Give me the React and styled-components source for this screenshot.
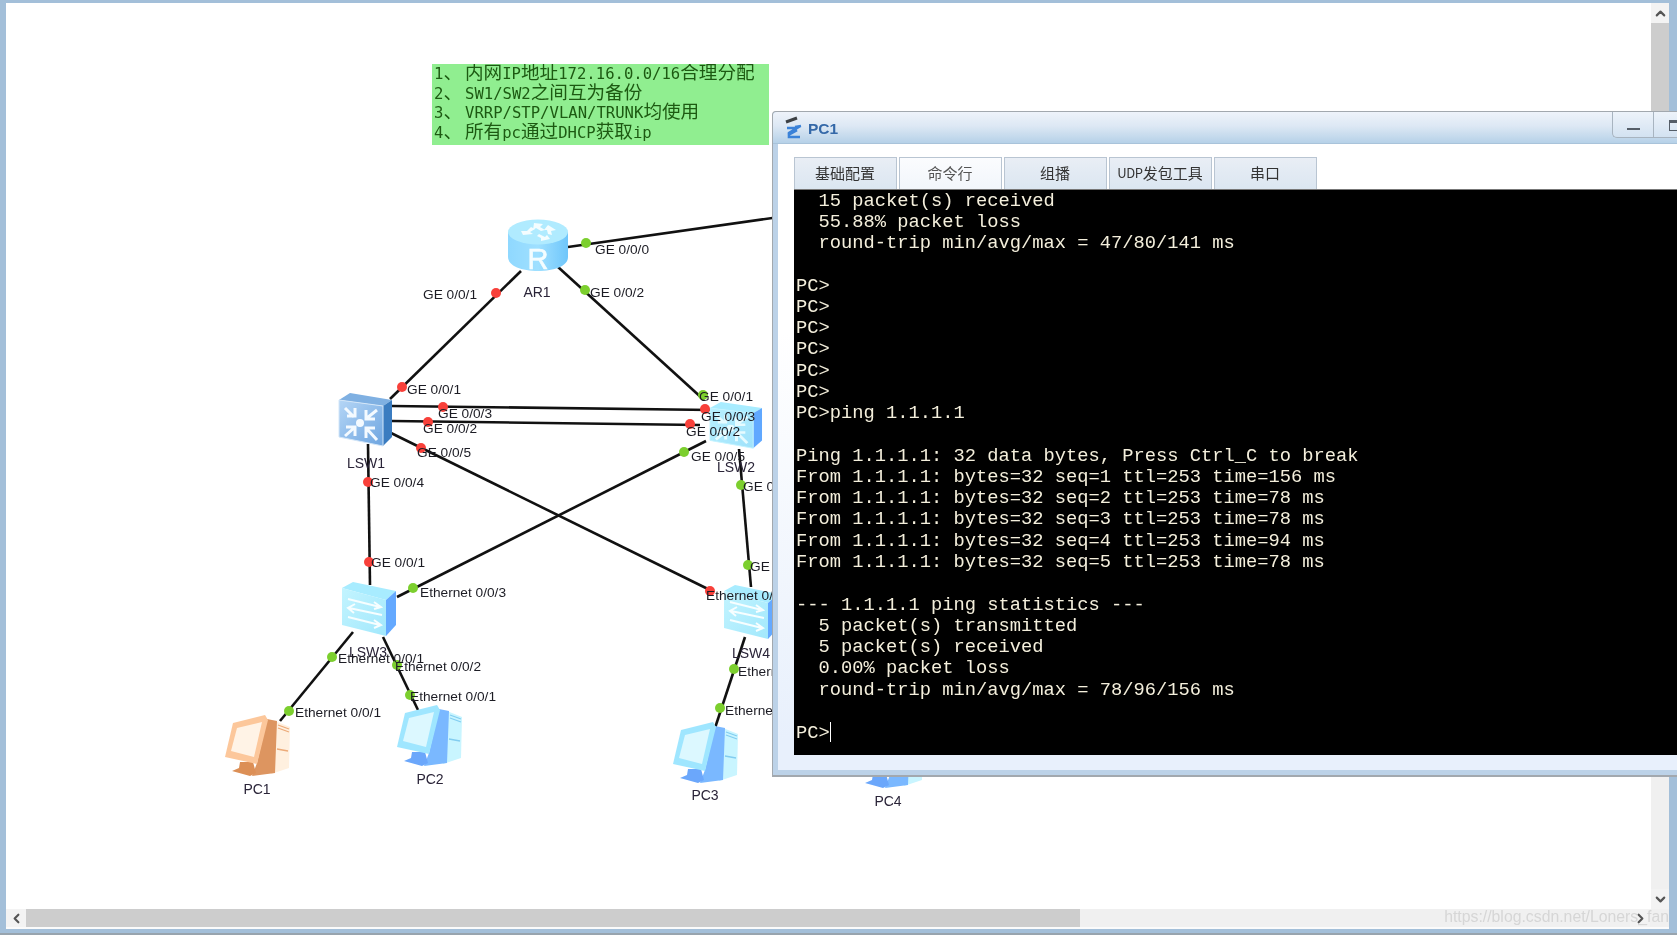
import React from "react";
import styled, { createGlobalStyle } from "styled-components";
import { ChevronUp, ChevronDown, ChevronLeft, ChevronRight } from "lucide-react";

// canvas sits at this page offset, all diagram data below is in page pixels
const OX = 6;
const OY = 3;

const links = [
  [568, 247, 790, 215.5],
  [521, 271, 390, 399],
  [558, 267, 704, 400],
  [392, 406, 712, 410],
  [392, 421, 700, 425],
  [391, 433, 712, 591],
  [706, 441, 397, 597],
  [368, 444, 370, 585],
  [739, 449, 751, 587],
  [353, 632, 280, 721],
  [383, 637, 418, 710],
  [745, 637, 715, 728],
];

const dots = [
  [586, 243, "g"], [496, 293, "r"], [585, 290, "g"], [402, 387, "r"], [703, 395, "g"],
  [443, 407, "r"], [705, 409, "r"], [428, 422, "r"], [690, 424, "r"], [421, 448, "r"],
  [684, 452, "g"], [368, 482, "r"], [369, 562, "r"], [741, 485, "g"], [748, 565, "g"],
  [710, 591, "r"], [413, 588, "g"], [332, 657, "g"], [397, 665, "g"], [734, 669, "g"],
  [410, 695, "g"], [289, 711, "g"], [720, 708, "g"],
];

const ports = [
  ["GE 0/0/0", 595, 249], ["GE 0/0/1", 423, 294], ["GE 0/0/2", 590, 292],
  ["GE 0/0/1", 407, 389], ["GE 0/0/1", 699, 396], ["GE 0/0/3", 438, 413],
  ["GE 0/0/3", 701, 416], ["GE 0/0/2", 423, 428], ["GE 0/0/2", 686, 431],
  ["GE 0/0/5", 417, 452], ["GE 0/0/5", 691, 456], ["GE 0/0/4", 370, 482],
  ["GE 0/0/1", 371, 562], ["GE 0/0/4", 743, 486], ["GE 0/0/1", 750, 566],
  ["Ethernet 0/0/3", 420, 592], ["Ethernet 0/0/3", 706, 595], ["Ethernet 0/0/1", 338, 658],
  ["Ethernet 0/0/2", 395, 666], ["Ethernet 0/0/1", 410, 696], ["Ethernet 0/0/1", 295, 712],
  ["Ethernet 0/0/2", 738, 671], ["Ethernet 0/0/1", 725, 710],
];

const names = [
  ["AR1", 537, 292], ["LSW1", 366, 463], ["LSW2", 736, 467], ["LSW3", 368, 652],
  ["LSW4", 751, 653], ["PC1", 257, 789], ["PC2", 430, 779], ["PC3", 705, 795], ["PC4", 888, 801],
];

const terminalText = `  15 packet(s) received
  55.88% packet loss
  round-trip min/avg/max = 47/80/141 ms

PC>
PC>
PC>
PC>
PC>
PC>
PC>ping 1.1.1.1

Ping 1.1.1.1: 32 data bytes, Press Ctrl_C to break
From 1.1.1.1: bytes=32 seq=1 ttl=253 time=156 ms
From 1.1.1.1: bytes=32 seq=2 ttl=253 time=78 ms
From 1.1.1.1: bytes=32 seq=3 ttl=253 time=78 ms
From 1.1.1.1: bytes=32 seq=4 ttl=253 time=94 ms
From 1.1.1.1: bytes=32 seq=5 ttl=253 time=78 ms

--- 1.1.1.1 ping statistics ---
  5 packet(s) transmitted
  5 packet(s) received
  0.00% packet loss
  round-trip min/avg/max = 78/96/156 ms

PC>`;

const GlobalStyle = createGlobalStyle`
  html, body {
    margin: 0;
    padding: 0;
    overflow: hidden;
    background: #a3bfd9;
  }
`;

const Frame = styled.div`
  position: relative;
  width: 1677px;
  height: 935px;
  box-sizing: border-box;
  padding: 3px 8px 4px 6px;
  display: flex;
  flex-direction: column;
  overflow: hidden;
  background: #a3bfd9;
  border-bottom: 2px solid #98a4ae;
  font-family: "Liberation Sans", Arial, sans-serif;
  filter: blur(0.4px);
`;

const CanvasRow = styled.div`
  display: flex;
  flex: none;
  height: 906px;
`;

const Canvas = styled.div`
  position: relative;
  flex: 1;
  background: #fff;
  overflow: hidden;
`;

const LinkLayer = styled.svg`
  position: absolute;
  left: 0;
  top: 0;
  width: 100%;
  height: 100%;
`;

const placed = (el) =>
  styled(el).attrs((p) => ({ style: { left: p.$x - OX, top: p.$y - OY } }))`
    position: absolute;
  `;

const Device = placed("div");

const Dot = styled(placed("span"))`
  width: 10px;
  height: 10px;
  margin: -5px 0 0 -5px;
  border-radius: 50%;
  background: ${(p) => (p.$up ? "#7ccf2e" : "#f8403a")};
`;

const PortLabel = styled(placed("span"))`
  transform: translateY(-50%);
  font-size: 13.7px;
  white-space: nowrap;
  color: #1c1c24;
`;

const DeviceName = styled(placed("span"))`
  transform: translate(-50%, -50%);
  font-size: 14px;
  white-space: nowrap;
  color: #2a2438;
`;

const Note = styled(placed("div"))`
  width: 337px;
  height: 81px;
  box-sizing: border-box;
  padding: 1px 2px 0;
  overflow: hidden;
  background: #90ee90;
  color: #1d5a12;
  font-family: "DejaVu Sans Mono", "Noto Sans CJK SC", monospace;
  font-size: 15.6px;
  line-height: 19.7px;
  white-space: pre;
`;

const Cjk = styled.span`
  font-family: "Noto Sans CJK SC", sans-serif;
  font-size: 18.6px;
  line-height: 0;
`;

const NoteMark = styled(Cjk)`
  margin-right: 3px;
`;

const VScroll = styled.div`
  width: 18px;
  display: flex;
  flex-direction: column;
  background: #f0f0f0;
`;

const VThumb = styled.div`
  flex: 1;
  margin-bottom: 206px;
  background: #cdcdcd;
`;

const ScrollBtn = styled.div`
  flex: none;
  width: ${(p) => p.$w || 18}px;
  height: ${(p) => p.$h || 18}px;
  display: flex;
  align-items: center;
  justify-content: center;
  color: #555;
  background: #f3f3f3;
`;

const HScroll = styled.div`
  position: relative;
  height: 18px;
  flex: none;
  display: flex;
  background: #f0f0f0;
  border-bottom: 2px solid #fbfbfb;
`;

const HThumb = styled.div`
  width: 1054px;
  background: #cdcdcd;
`;

const HSpacer = styled.div`
  flex: 1;
`;

const Corner = styled.div`
  width: 19px;
`;

const Watermark = styled.span`
  position: absolute;
  right: 0;
  top: -1px;
  font-size: 15.8px;
  white-space: nowrap;
  color: #d6d6d6;
`;

const PcWindow = styled.div`
  position: absolute;
  left: 772px;
  top: 111px;
  width: 982px;
  height: 666px;
  box-sizing: border-box;
  display: flex;
  flex-direction: column;
  border: 1px solid #a2a8ae;
  border-bottom-width: 2px;
  border-radius: 4px 4px 0 0;
  background: #bcd2e8;
  padding: 0 0 5px 5px;
`;

const TitleBar = styled.div`
  height: 31px;
  margin-left: -5px;
  padding-left: 10px;
  display: flex;
  align-items: center;
  flex: none;
  border-radius: 4px 4px 0 0;
  border-bottom: 1px solid #a9c3da;
  background: linear-gradient(#eef3fa, #dde8f4 45%, #b6d1e8);
`;

const TitleIcon = styled.svg`
  width: 22px;
  height: 24px;
  margin-right: 3px;
`;

const TitleText = styled.span`
  padding-top: 2px;
  font-size: 15.5px;
  font-weight: bold;
  color: #3468a8;
`;

const TitleSpacer = styled.div`
  flex: 1;
`;

const WinButton = styled.div`
  width: ${(p) => p.$w || 41}px;
  height: 26px;
  align-self: flex-start;
  box-sizing: border-box;
  display: flex;
  align-items: flex-end;
  justify-content: center;
  padding-bottom: 7px;
  border-left: 1px solid #a8b4c0;
  border-bottom: 1px solid #a8b4c0;
  border-radius: ${(p) => (p.$first ? "0 0 0 5px" : "0")};
  background: linear-gradient(#edf3fa, #d3e2f1);
`;

const MinGlyph = styled.span`
  width: 13px;
  height: 2px;
  background: #555e68;
`;

const MaxGlyph = styled.span`
  width: 22px;
  height: 11px;
  box-sizing: border-box;
  margin: 0 0 -1px 12px;
  border: 1px solid #555e68;
  border-top-width: 3px;
`;

const Body = styled.div`
  flex: 1;
  display: flex;
  flex-direction: column;
  padding: 13px 0 15px 15.5px;
  background: linear-gradient(#fff 30%, #e8f0fc 95%);
`;

const TabRow = styled.div`
  display: flex;
  gap: 2px;
  height: 32px;
  flex: none;
`;

const Tab = styled.div`
  width: 103px;
  box-sizing: border-box;
  padding-bottom: 2px;
  display: flex;
  align-items: center;
  justify-content: center;
  border: 1px solid #b9c5d2;
  border-bottom: none;
  background: ${(p) =>
    p.$active
      ? "linear-gradient(#fbfcfe, #f2f6fb)"
      : "linear-gradient(#e9eef5, #dbe6f1)"};
  font-family: "Noto Sans CJK SC", sans-serif;
  font-size: 15px;
  color: ${(p) => (p.$active ? "#555" : "#333")};
`;

const TabLatin = styled.span`
  font-size: 13px;
  letter-spacing: -0.3px;
`;

const Terminal = styled.div`
  flex: 1;
  position: relative;
  overflow: hidden;
  background: #000;
  border-top: 1px solid #777;
  padding: 0.5px 0 0 2.5px;
  color: #f4efdc;
  font-family: "Liberation Mono", "Courier New", monospace;
  font-size: 18.76px;
  line-height: 21.26px;
  white-space: pre;
`;

const Cursor = styled.span`
  display: inline-block;
  width: 1px;
  height: 20px;
  background: #fff;
  vertical-align: -4px;
`;

function Router() {
  return (
    <svg width="60" height="53" viewBox="0 0 60 53">
      <defs>
        <linearGradient id="routerBody" x1="0" x2="1" y1="0" y2="0">
          <stop offset="0" stopColor="#8fd8ff" />
          <stop offset="0.5" stopColor="#9fe0ff" />
          <stop offset="1" stopColor="#6fc6fb" />
        </linearGradient>
      </defs>
      <path d="M0 13 V38 C0 47 14 52 30 52 C46 52 60 47 60 38 V13 Z" fill="url(#routerBody)" />
      <ellipse cx="30" cy="13" rx="30" ry="12.5" fill="#b0ebff" />
      <g fill="#f4fdff">
        <path d="M26 4 L35 5 L32 8 L37 11 L33 12 L28 9 L25 11 Z" />
        <path d="M40 6 L48 11 L43 12 L44 16 L40 15 L39 11 L36 11 Z" />
        <path d="M23 8 L27 10 L22 13 L25 15 L15 16 L13 12 L19 12 Z" />
        <path d="M31 15 L37 18 L39 16 L42 20 L33 22 L33 19 L29 17 Z" />
      </g>
      <text
        x="30"
        y="50"
        textAnchor="middle"
        fontFamily="Liberation Sans"
        fontSize="29"
        fill="#f4fdff"
        stroke="#f4fdff"
        strokeWidth="0.6"
      >
        R
      </text>
    </svg>
  );
}

const switchTones = {
  core: { id: "coreFront", from: "#b5d6f6", to: "#6ea5e0", top: "#7fb0e2", side: "#3a7cc0", edge: "#d3e6f8", mark: "#f4faff" },
  light: { id: "lightFront", from: "#b8f0ff", to: "#9fe2fb", top: "#a8ecff", side: "#60a8ff", edge: "#c4f3ff", mark: "#e6fbff" },
};

function CoreSwitch({ tone = "core", width = 55, height = 55 }) {
  const c = switchTones[tone];
  return (
    <svg width={width} height={height} viewBox="0 0 55 55" preserveAspectRatio="none">
      <defs>
        <linearGradient id={c.id} x1="0" x2="1" y1="0" y2="1">
          <stop offset="0" stopColor={c.from} />
          <stop offset="1" stopColor={c.to} />
        </linearGradient>
      </defs>
      <path d="M1 7 L12 0 L54 7 L45 13 Z" fill={c.top} />
      <path d="M45 13 L54 7 L54 44 L45 53 Z" fill={c.side} />
      <path d="M1 7 L45 13 V53 L1 44 Z" fill={`url(#${c.id})`} stroke={c.edge} strokeWidth="1" />
      <circle cx="22" cy="30" r="4" fill={c.mark} />
      <g stroke={c.mark} strokeWidth="3" fill="none">
        <path d="M7 15 L16 24 M9 23 H17 V15" />
        <path d="M39 17 L29 25 M28 17 V26 H37" />
        <path d="M7 43 L16 35 M8 34 H17 V43" />
        <path d="M39 47 L29 36 M28 45 V35 H37" />
      </g>
    </svg>
  );
}

function AccessSwitch() {
  return (
    <svg width="55" height="55" viewBox="0 0 55 55">
      <defs>
        <linearGradient id="accessFront" x1="0" x2="1" y1="0" y2="1">
          <stop offset="0" stopColor="#c3f4ff" />
          <stop offset="1" stopColor="#a2e8fc" />
        </linearGradient>
      </defs>
      <path d="M0 6 L11 0 L54 9 L44 18 Z" fill="#a8ecff" />
      <path d="M44 18 L54 9 L54 43 L44 54 Z" fill="#64a9ff" />
      <path d="M0 6 L44 18 V54 L0 43 Z" fill="url(#accessFront)" />
      <g stroke="#f7feff" strokeWidth="2" fill="none">
        <path d="M6 17 L38 25 M32 20 L39 25 L32 27" />
        <path d="M40 33 L7 26 M13 22 L6 26 L12 31" />
        <path d="M6 35 L38 43 M32 38 L39 43 L32 46" />
      </g>
    </svg>
  );
}

const pcThemes = {
  orange: { shell: "#fcc79b", screen: "#fff3e6", side: "#dd9560", tower: "#fff0df", base: "#dc8f56", mark: "#ecaa78" },
  blue: { shell: "#9fe6ff", screen: "#dcf8ff", side: "#7ab8ff", tower: "#c9f5ff", base: "#6ba7fb", mark: "#82cdf0" },
};

function PcIcon({ tone }) {
  const c = pcThemes[tone];
  return (
    <svg width="66" height="62" viewBox="0 0 66 62">
      <path d="M50 6 L65 12 L64 53 L46 59 Z" fill={c.tower} />
      <path d="M42 4 L52 6 L50 58 L27 61 L32 48 Z" fill={c.side} />
      <path d="M53 10 L64 14 M53 13 L64 17 M52 34 L63 36" stroke={c.mark} strokeWidth="1.3" />
      <path d="M15 47 H28 L31 58 L25 61 L7 56 L14 53 Z" fill={c.base} />
      <path d="M8 8 L40 0 L43 5 L32 49 L0 42 Z" fill={c.shell} />
      <path d="M12 13 L37 7 L29 42 L6 36 Z" fill={c.screen} />
    </svg>
  );
}

function ChevronIcon({ as: Icon }) {
  return <Icon size={15} strokeWidth={3.4} />;
}

export default function App() {
  return (
    <>
      <GlobalStyle />
      <Frame>
        <CanvasRow>
          <Canvas>
            <LinkLayer>
              {links.map(([x1, y1, x2, y2], i) => (
                <line
                  key={i}
                  x1={x1 - OX}
                  y1={y1 - OY}
                  x2={x2 - OX}
                  y2={y2 - OY}
                  stroke="#111"
                  strokeWidth="2.6"
                />
              ))}
            </LinkLayer>

            <Note $x={432} $y={64}>
              1<NoteMark>、</NoteMark><Cjk>内网</Cjk>IP<Cjk>地址</Cjk>172.16.0.0/16<Cjk>合理分配</Cjk>
              {"\n"}2<NoteMark>、</NoteMark>SW1/SW2<Cjk>之间互为备份</Cjk>
              {"\n"}3<NoteMark>、</NoteMark>VRRP/STP/VLAN/TRUNK<Cjk>均使用</Cjk>
              {"\n"}4<NoteMark>、</NoteMark><Cjk>所有</Cjk>pc<Cjk>通过</Cjk>DHCP<Cjk>获取</Cjk>ip
            </Note>

            <Device $x={508} $y={219}><Router /></Device>
            <Device $x={338} $y={393}><CoreSwitch /></Device>
            <Device $x={709} $y={402}><CoreSwitch tone="light" width={54} height={48} /></Device>
            <Device $x={342} $y={582}><AccessSwitch /></Device>
            <Device $x={724} $y={585}><AccessSwitch /></Device>
            <Device $x={225} $y={715}><PcIcon tone="orange" /></Device>
            <Device $x={397} $y={705}><PcIcon tone="blue" /></Device>
            <Device $x={673} $y={722}><PcIcon tone="blue" /></Device>
            <Device $x={858} $y={727}><PcIcon tone="blue" /></Device>

            {dots.map(([x, y, state], i) => (
              <Dot key={i} $x={x} $y={y} $up={state === "g"} />
            ))}
            {names.map(([text, x, y]) => (
              <DeviceName key={text} $x={x} $y={y}>{text}</DeviceName>
            ))}
            {ports.map(([text, x, y], i) => (
              <PortLabel key={i} $x={x} $y={y}>{text}</PortLabel>
            ))}
          </Canvas>
          <VScroll>
            <ScrollBtn $h={20}><ChevronIcon as={ChevronUp} /></ScrollBtn>
            <VThumb />
            <ScrollBtn $h={20}><ChevronIcon as={ChevronDown} /></ScrollBtn>
          </VScroll>
        </CanvasRow>
        <HScroll>
          <ScrollBtn $w={20}><ChevronIcon as={ChevronLeft} /></ScrollBtn>
          <HThumb />
          <HSpacer />
          <ScrollBtn $w={20}><ChevronIcon as={ChevronRight} /></ScrollBtn>
          <Corner />
          <Watermark>https://blog.csdn.net/Loners_fan</Watermark>
        </HScroll>

        <PcWindow>
          <TitleBar>
            <TitleIcon viewBox="0 0 22 24">
              <path d="M3 6 L14 2" stroke="#3c4044" strokeWidth="3" />
              <path d="M4 12 H14 L6 17 V21 H17 M12 11 L18 10 M5 19 L14 14" stroke="#3b82d8" strokeWidth="2.6" fill="none" />
            </TitleIcon>
            <TitleText>PC1</TitleText>
            <TitleSpacer />
            <WinButton $first><MinGlyph /></WinButton>
            <WinButton><MaxGlyph /></WinButton>
            <WinButton $w={59} />
          </TitleBar>
          <Body>
            <TabRow>
              <Tab>基础配置</Tab>
              <Tab $active>命令行</Tab>
              <Tab>组播</Tab>
              <Tab><TabLatin>UDP</TabLatin>发包工具</Tab>
              <Tab>串口</Tab>
            </TabRow>
            <Terminal>
              {terminalText}
              <Cursor />
            </Terminal>
          </Body>
        </PcWindow>
      </Frame>
    </>
  );
}
